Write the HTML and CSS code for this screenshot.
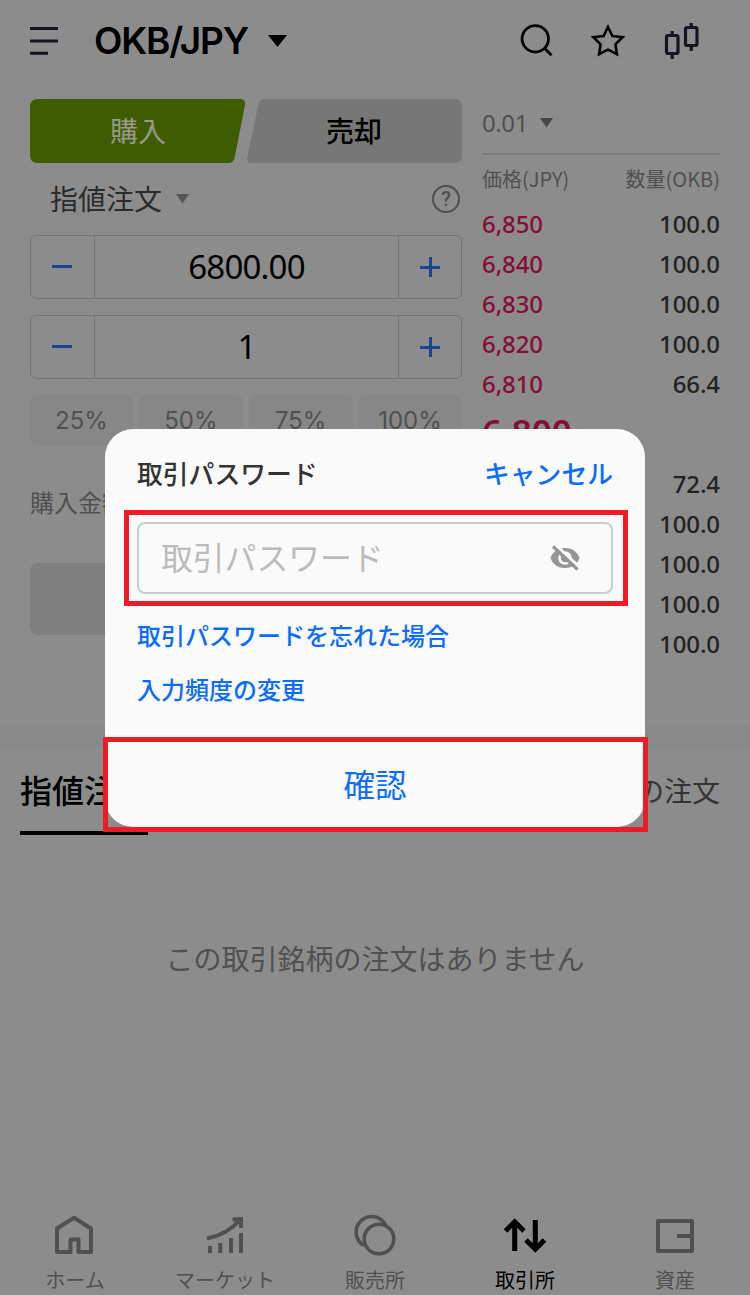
FILE: index.html
```html
<!DOCTYPE html>
<html lang="ja">
<head>
    <meta charset="UTF-8">
    <meta name="viewport" content="width=device-width, initial-scale=1.0">
    <title>OKB/JPY</title>
    <link rel="stylesheet" href="styles.css">
</head>
<body>
    <div class="screen">
        <header class="header">
            <svg class="menu" width="28" height="28" viewBox="0 0 28 28" fill="none" stroke="#131620" stroke-width="3">
                <path d="M0 1.5H28M0 14H28M0 26.3H18"/>
            </svg>
            <h1>OKB/JPY</h1>
            <svg class="pair-caret" width="19" height="12" viewBox="0 0 19 12"><path d="M0 0H19L9.5 12Z"/></svg>
            <svg class="search" width="34" height="34" viewBox="0 0 34 34" fill="none" stroke="#000" stroke-width="2.8">
                <circle cx="15.3" cy="14.8" r="13.2"/>
                <path d="M24.5 24.2L31.5 31.2"/>
            </svg>
            <svg class="star" width="34" height="34" viewBox="0 0 34 34" fill="none" stroke="#000" stroke-width="2.6">
                <path d="M17 3L21.4 12L31.6 13.2L24.4 20.4L25.9 30.2L17 25.6L8.1 30.2L9.6 20.4L2.4 13.2L12.6 12Z"/>
            </svg>
            <svg class="candles" width="36" height="38" viewBox="0 0 36 38" fill="none" stroke="#131620" stroke-width="3.2">
                <rect x="2.5" y="13.5" width="11.5" height="18" rx="1.5"/>
                <rect x="21.500" y="5.5" width="11.5" height="18" rx="1.5"/>
                <path d="M8.200 9V13M8.200 32V37M27.200 1V5M27.200 24V29"/>
            </svg>
        </header>

        <main class="trade">
            <section class="order">
                <div class="side-tabs">
                    <svg width="432" height="64" viewBox="0 0 432 64">
                        <path fill="#3f5d00" d="M8 0H210Q216 0 215 6L204.500 59Q203.500 64 198 64H8Q0 64 0 56V8Q0 0 8 0Z"/>
                        <path fill="#777" d="M235 0H424Q432 0 432 8V56Q432 64 424 64H221Q216.500 64 217.200 59L228.500 5Q229.500 0 235 0Z"/>
                    </svg>
                    <span class="buy">購入</span>
                    <span class="sell">売却</span>
                </div>
                <div class="order-type">
                    <span>指値注文</span>
                    <svg width="13" height="10" viewBox="0 0 13 10"><path fill="#555" d="M0 0H13L6.500 9.500Z"/></svg>
                    <span class="help">?</span>
                </div>
                <div class="stepper">
                    <span class="step minus"></span>
                    <span class="value">6800.00</span>
                    <span class="step plus"></span>
                </div>
                <div class="stepper">
                    <span class="step minus"></span>
                    <span class="value">1</span>
                    <span class="step plus"></span>
                </div>
                <div class="percents">
                    <span>25%</span><span>50%</span><span>75%</span><span>100%</span>
                </div>
                <div class="amount">購入金額</div>
                <div class="submit"></div>
            </section>

            <section class="book">
                <div class="precision">
                    <span>0.01</span>
                    <svg width="13" height="10" viewBox="0 0 13 10"><path fill="#484848" d="M0 0H13L6.500 9.500Z"/></svg>
                </div>
                <div class="book-head"><span>価格(JPY)</span><span>数量(OKB)</span></div>
                <div class="row"><b>6,850</b><span>100.0</span></div>
                <div class="row"><b>6,840</b><span>100.0</span></div>
                <div class="row"><b>6,830</b><span>100.0</span></div>
                <div class="row"><b>6,820</b><span>100.0</span></div>
                <div class="row"><b>6,810</b><span>66.4</span></div>
                <div class="last-price">6,800</div>
                <div class="row"><span>72.4</span></div>
                <div class="row"><span>100.0</span></div>
                <div class="row"><span>100.0</span></div>
                <div class="row"><span>100.0</span></div>
                <div class="row"><span>100.0</span></div>
            </section>
        </main>

        <section class="orders">
            <div class="order-tabs">
                <span class="active">指値注文</span>
                <span>全ての注文</span>
            </div>
            <p class="empty">この取引銘柄の注文はありません</p>
        </section>

        <nav class="nav">
            <div class="nav-item">
                <svg width="44" height="44" viewBox="0 0 44 44" fill="none" stroke="#505050" stroke-width="4" stroke-linejoin="round">
                    <path d="M4 39V15.500L21 4.700L38 15.500V39H25.500V26.500H17.500V39Z"/>
                </svg>
                <span>ホーム</span>
            </div>
            <div class="nav-item">
                <svg width="44" height="44" viewBox="0 0 44 44" fill="none" stroke="#505050" stroke-width="4">
                    <path d="M7 40V33M17.300 40V30M28 40V25M38 40V20"/>
                    <path d="M4 25.500C18 23 28 17 37 7M29.500 6.500L38 6V15"/>
                </svg>
                <span>マーケット</span>
            </div>
            <div class="nav-item">
                <svg width="44" height="44" viewBox="0 0 44 44" fill="none" stroke="#505050" stroke-width="3.600">
                    <path d="M11 32.500A15.500 15.500 0 1 1 32.500 12"/>
                    <circle cx="26" cy="26" r="14.800"/>
                </svg>
                <span>販売所</span>
            </div>
            <div class="nav-item current">
                <svg width="44" height="44" viewBox="0 0 44 44" fill="none" stroke="#000" stroke-width="5">
                    <path d="M11.700 38V9M2.500 18L11.700 8.700L21 18M32.300 7V36M23 27L32.300 36.300L41.500 27"/>
                </svg>
                <span>取引所</span>
            </div>
            <div class="nav-item">
                <svg width="44" height="44" viewBox="0 0 44 44" fill="none" stroke="#505050" stroke-width="4" stroke-linejoin="round">
                    <path d="M5 8H39V38H5ZM24 23H38"/>
                </svg>
                <span>資産</span>
            </div>
        </nav>

        <div class="modal">
            <div class="modal-head">
                <h2>取引パスワード</h2>
                <a>キャンセル</a>
            </div>
            <div class="password">
                <span>取引パスワード</span>
                <svg width="32" height="28" viewBox="0 0 32 28">
                    <path fill="#959595" d="M16 4C24 4 29 9 30.500 14C29 19 24 24 16 24S3 19 1.500 14C3 9 8 4 16 4Z"/>
                    <circle cx="16" cy="14" r="5.500" fill="none" stroke="#fafafa" stroke-width="2.600"/>
                    <path d="M6 .5L31 23.500" stroke="#fafafa" stroke-width="3"/>
                    <path d="M4 2.500L28.500 25.500" stroke="#959595" stroke-width="3.200"/>
                </svg>
            </div>
            <a class="link">取引パスワードを忘れた場合</a>
            <a class="link">入力頻度の変更</a>
            <div class="confirm">確認</div>
        </div>
        <div class="mark mark-input"></div>
        <div class="mark mark-confirm"></div>
    </div>
</body>
</html>
```
FILE: styles.css
```css
* {
    box-sizing: border-box;
}
body {
    margin: 0;
    font-family: "Noto Sans CJK JP", sans-serif;
    background: #8c8c8c;
}
svg {
    display: block;
    flex: none;
}
.screen {
    position: relative;
    display: flex;
    flex-direction: column;
    width: 750px;
    height: 1295px;
    overflow: hidden;
    background: #8c8c8c;
}
.header {
    display: flex;
    align-items: center;
    height: 82px;
    padding: 0 50px 0 30px;
}
.header h1 {
    width: 154px;
    margin: 0 20px 0 36px;
    font: 600 37px/44px Inter, sans-serif;
    letter-spacing: -1.2px;
    white-space: nowrap;
}
.search {
    margin-left: auto;
}
.star {
    margin: 0 39px 0 37px;
}
.trade {
    display: flex;
    gap: 20px;
    height: 645px;
    padding: 17px 30px 0;
}
.order {
    width: 432px;
}
.side-tabs {
    display: grid;
    height: 64px;
    grid-template-columns: 216px 216px;
    text-align: center;
    font-size: 28px;
    line-height: 62px;
    font-weight: 500;
}
.side-tabs svg {
    grid-area: 1 / 1 / 2 / 3;
}
.buy {
    grid-area: 1 / 1;
    color: #979a8e;
    font-weight: 400;
}
.sell {
    grid-area: 1 / 2;
}
.order-type {
    display: flex;
    align-items: center;
    height: 72px;
    padding: 0 2px 0 20px;
    font-size: 28px;
    line-height: 40px;
    color: #2b2b2b;
}
.order-type span:first-child {
    padding-bottom: 2px;
}
.order-type svg {
    margin-left: 14px;
}
.help {
    width: 28px;
    height: 28px;
    margin-left: auto;
    border: 2px solid #505050;
    border-radius: 50%;
    font: 500 20px/24px Roboto, sans-serif;
    text-align: center;
    color: #505050;
}
.stepper {
    display: flex;
    height: 64px;
    margin-bottom: 16px;
    border: 1px solid #747474;
    border-radius: 6px;
}
.step {
    display: grid;
    place-items: center;
    width: 63px;
}
.minus {
    padding: 0 1px 1px 0;
}
.plus {
    width: 62px;
}
.step::before, .plus::after {
    content: "";
    grid-area: 1 / 1;
    width: 20px;
    height: 3px;
    background: #194490;
}
.plus::after {
    width: 3px;
    height: 20px;
}
.value {
    flex: 1;
    border: 1px solid #747474;
    border-width: 0 1px;
    text-align: center;
    font: 33px/61px "Noto Sans", sans-serif;
    letter-spacing: -0.8px;
}
.percents {
    display: grid;
    grid-template-columns: 103px 105px 104px 104px;
    justify-content: space-between;
    font: 24px/51px Inter, sans-serif;
    text-align: center;
    color: #505050;
}
.percents span {
    height: 50px;
    border-radius: 6px;
    background: #878787;
}
.amount {
    margin-top: 38px;
    font-size: 24px;
    line-height: 38px;
    color: #505050;
}
.submit {
    height: 72px;
    margin-top: 42px;
    border-radius: 8px;
    background: #7f7f7f;
}
.book {
    width: 238px;
}
.precision {
    display: flex;
    align-items: center;
    gap: 12px;
    height: 56px;
    padding-bottom: 6px;
    border-bottom: 2px solid #7c7c7c;
    font: 24px/40px "Noto Sans", sans-serif;
    letter-spacing: -0.4px;
    color: #505050;
}
.book-head {
    display: flex;
    justify-content: space-between;
    height: 50px;
    font-size: 20px;
    line-height: 48px;
    color: #505050;
}
.row {
    display: flex;
    justify-content: space-between;
    height: 40px;
    font: 500 24px/38px "Noto Sans", sans-serif;
    letter-spacing: -0.1px;
    color: #222;
}
.row b {
    font-weight: 500;
    color: #860d37;
}
.row span {
    margin-left: auto;
}
.last-price {
    height: 60px;
    font: 600 35px/54px "Noto Sans", sans-serif;
    color: #860d37;
}
.orders {
    border-top: 20px solid #888;
}
.order-tabs {
    display: flex;
    justify-content: space-between;
    padding: 0 30px 0 20px;
    height: 88px;
    font-size: 28px;
    line-height: 86px;
    color: #333;
}
.order-tabs .active {
    height: 88px;
    border-bottom: 4px solid #000;
    font-size: 32px;
    line-height: 84px;
    font-weight: 500;
    color: #000;
}
.empty {
    margin: 103px 0 0;
    text-align: center;
    font-size: 28px;
    line-height: 40px;
    color: #505050;
}
.nav {
    display: flex;
    height: 82px;
    margin-top: auto;
}
.nav-item {
    display: flex;
    flex-direction: column;
    align-items: center;
    width: 150px;
    font-size: 20px;
    line-height: 45px;
    white-space: nowrap;
    color: #505050;
}
.current {
    color: #000;
}
.modal {
    position: absolute;
    left: 105px;
    top: 429px;
    display: flex;
    flex-direction: column;
    width: 540px;
    height: 398px;
    padding: 24px 32px 0;
    border-radius: 28px;
    background: #fafafa;
    color: #0a6cff;
}
.modal-head {
    display: flex;
    justify-content: space-between;
    height: 69px;
    font-size: 25.8px;
    line-height: 40px;
    font-weight: 500;
}
.modal-head h2 {
    margin: 0;
    font: inherit;
    color: #333;
}
.password {
    display: flex;
    align-items: center;
    justify-content: space-between;
    height: 72px;
    padding: 0 30px 0 22px;
    margin-bottom: 14px;
    border: 2px solid #ccc;
    border-radius: 8px;
    font-size: 31.8px;
    line-height: 60px;
    color: #bbb;
}
.password span {
    padding-bottom: 5px;
}
.link {
    font-size: 24px;
    line-height: 54px;
    font-weight: 500;
}
.confirm {
    text-align: center;
    font-size: 31.5px;
    line-height: 78px;
    margin-top: 28px;
}
.mark {
    position: absolute;
    border: 5px solid #ed1c24;
}
.mark-input {
    left: 124px;
    top: 510px;
    width: 504px;
    height: 96px;
}
.mark-confirm {
    left: 103px;
    top: 737px;
    width: 545px;
    height: 95px;
}
```
